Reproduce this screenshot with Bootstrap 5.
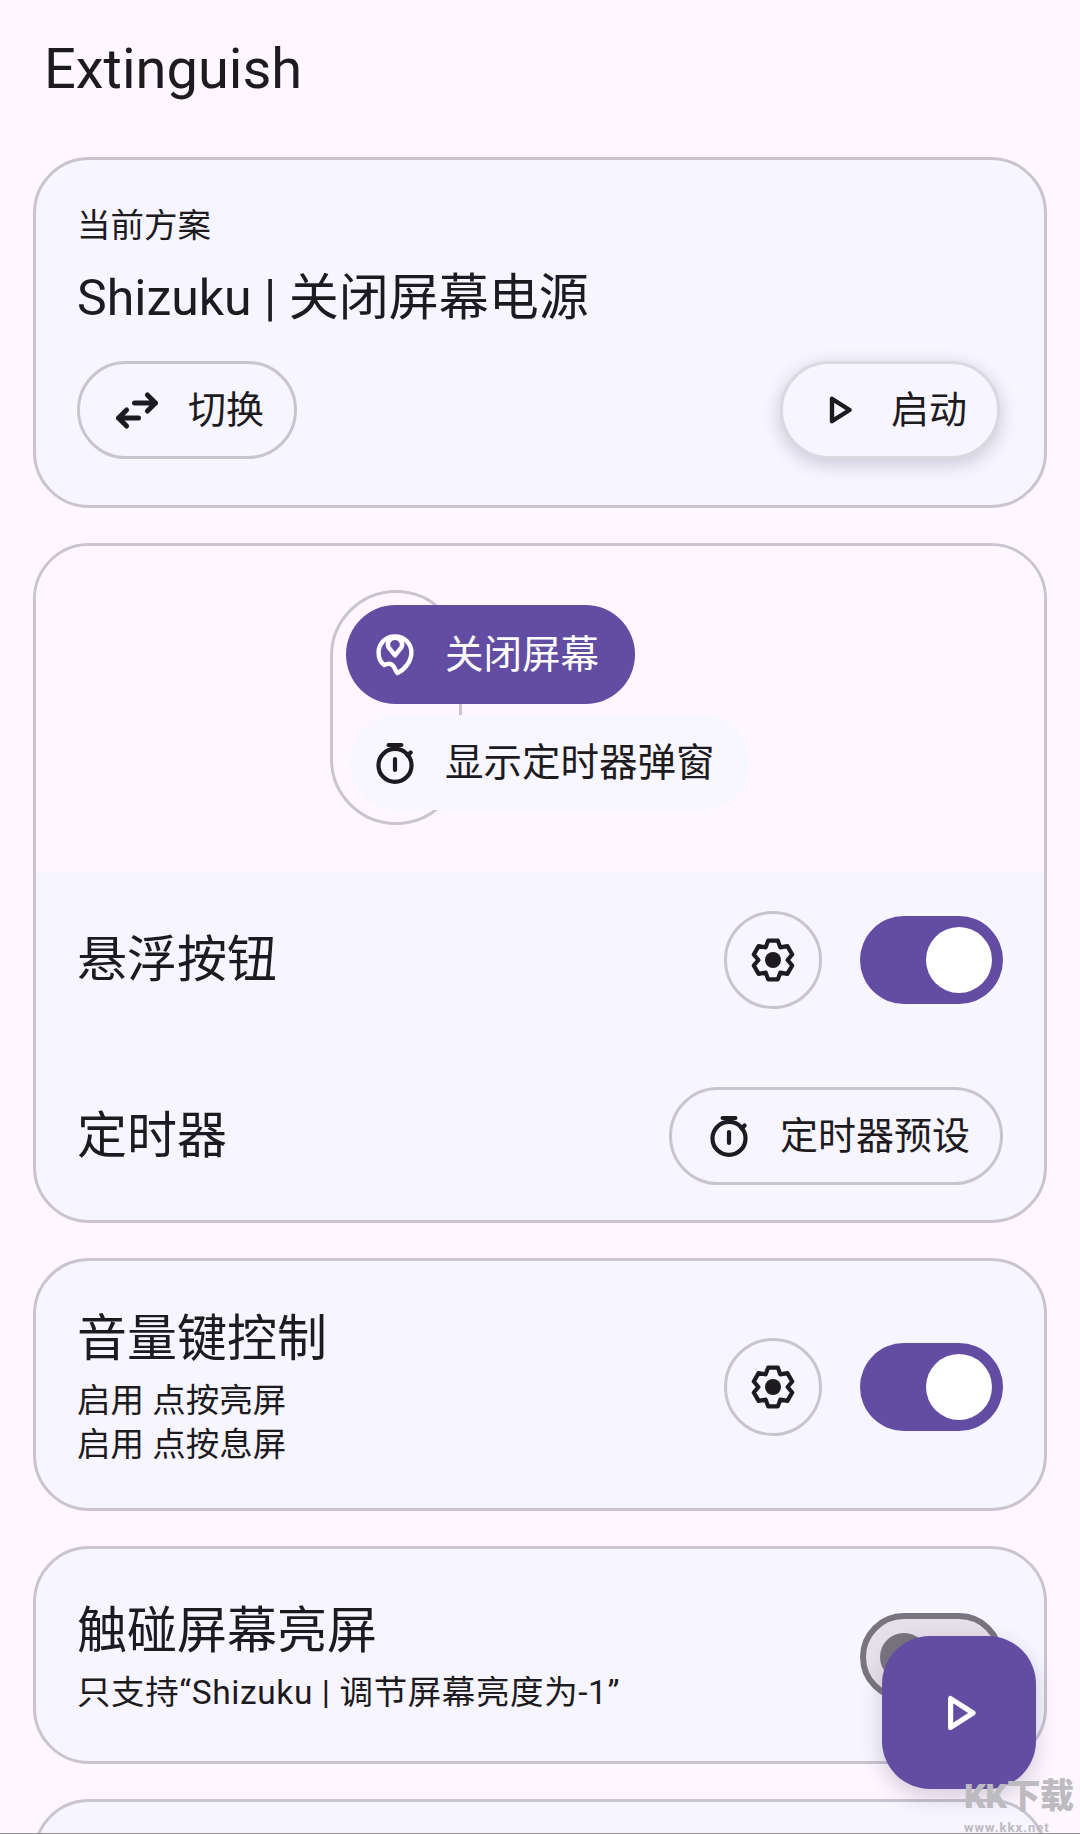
<!doctype html>
<html lang="zh">
<head>
<meta charset="utf-8">
<title>Extinguish</title>
<link href="https://cdn.jsdelivr.net/npm/bootstrap@5.3.0/dist/css/bootstrap.min.css" rel="stylesheet">
<style>
html,body{height:100%;}
body{background:#fef7ff;color:#1d1b20;font-family:Roboto,"Noto Sans CJK SC",sans-serif;width:1080px;height:1834px;overflow:hidden;position:relative;}
.app-title{font-size:56px;line-height:64px;padding:37px 0 0 44px;margin:0;font-weight:400;height:157px;}
.stack{padding:0 33px;gap:35px;}
.panel{background:#f7f5ff;border:3px solid #cac4d0;border-radius:56px;overflow:hidden;flex:none;}
.panel-a{height:351px;padding:44px 44px 0 41px;}
.cur-name{margin-top:18px;}
.cur-actions{margin-top:31px;}
.lbl{font-size:33.5px;line-height:44px;}
.lbl-wide{letter-spacing:.6px;}
.big{font-size:50px;line-height:64px;}
.pill-btn{height:98px;border:3px solid #cac4d0;border-radius:49px;background:transparent;color:#1d1b20;font-size:38px;line-height:1;padding:0 30px 0 33px;gap:27px;display:flex;align-items:center;}
.pill-btn.raised{background:#f7f5ff;border-color:#dcd8e2;box-shadow:0 5px 18px rgba(60,50,90,.24);}
.ic{flex:none;display:block;}
.preview{background:#fef7ff;height:326px;position:relative;}
.ring{position:absolute;left:294px;top:44px;width:132px;height:235px;border:3px solid #cac4d0;border-radius:66px;}
.opts{position:absolute;left:310px;top:59px;gap:11px;}
.opt{border-radius:50px;display:flex;align-items:center;font-size:38.5px;gap:26px;position:relative;}
.opt.on{background:#624da3;color:#fff;width:289px;height:99px;padding-left:25px;}
.opt.off{background:#f8f6ff;height:95px;width:400px;margin-left:4px;padding-left:21px;}
.lower{padding:39px 41px 35px 41px;}
.lower-row{margin-top:78px;}
.round-btn{width:98px;height:98px;border:3px solid #cac4d0;border-radius:50%;background:transparent;padding:0;flex:none;}
.toggle{width:143px;height:88px;border-radius:44px;background:#624da3;position:relative;flex:none;margin-left:38px;}
.toggle::after{content:"";position:absolute;right:11px;top:11px;width:66px;height:66px;border-radius:50%;background:#fff;}
.toggle.dim{background:#e6e0e9;border:6px solid #79747e;}
.toggle.dim::after{left:14px;top:14px;right:auto;width:48px;height:48px;background:#79747e;}
.panel-c{padding:46px 41px 41px 41px;}
.panel-d{padding:50px 41px 46px 41px;}
.gap8{margin-bottom:8px;}
.panel-e{height:120px;}
.fab{position:absolute;left:882px;top:1636px;width:154px;height:153px;border-radius:48px;background:#624da3;box-shadow:0 8px 22px rgba(60,50,90,.22);border:0;padding:0;}
.mark-kk{position:absolute;left:964px;top:1779px;width:116px;font-weight:700;line-height:1;}
.mark-kk b{display:block;font-size:34px;letter-spacing:-.5px;color:#bdbbc0;}
.mark-kk i{display:block;font-style:normal;font-size:13px;letter-spacing:1px;margin-top:8px;color:#bdbbc0;}
.edge{position:absolute;left:0;right:0;bottom:0;height:1px;background:#8f8d92;}
</style>
</head>
<body>
<h1 class="app-title">Extinguish</h1>
<div class="stack d-flex flex-column">
  <section class="panel panel-a">
    <div class="lbl">当前方案</div>
    <div class="big cur-name">Shizuku | 关闭屏幕电源</div>
    <div class="d-flex justify-content-between cur-actions">
      <button class="pill-btn" type="button">
        <svg class="ic" width="48" height="48" viewBox="0 0 24 24" fill="none" stroke="#1d1b20" stroke-width="2.5" stroke-linecap="round" stroke-linejoin="round"><path d="M10.75 8.5H21.25M17.2 4.5l4.05 4-4.05 4"/><path d="M12.75 16H2.75M6.8 12l-4.05 4 4.05 4"/></svg>
        <span>切换</span>
      </button>
      <button class="pill-btn raised" type="button">
        <svg class="ic" width="48" height="48" viewBox="0 0 24 24" fill="none" stroke="#1d1b20" stroke-width="2.2" stroke-linejoin="round"><path d="M8 6.4v11.2L16.8 12z"/></svg>
        <span>启动</span>
      </button>
    </div>
  </section>

  <section class="panel">
    <div class="preview">
      <div class="ring"></div>
      <div class="opts d-flex flex-column">
        <div class="opt on">
          <svg class="ic" width="48" height="48" viewBox="0 0 24 24" fill="none" stroke="#fff" stroke-width="2.2" stroke-linejoin="round" stroke-linecap="round"><path d="M12 2.7C7.3 2.7 3.8 6.4 3.8 10.7c0 2.7 1.1 5 2.8 6.3 1.4-.7 3.2-.9 4.3.2 1.1 1.1 1.4 3 2.3 3.8 3.3-1.5 7-5.6 7-10.3 0-4.3-3.5-8-8.2-8z"/><path d="M12 12.2 8.8 8.2C7.6 6 9.4 3.4 12 3.4s4.4 2.6 3.2 4.8z"/></svg>
          <span>关闭屏幕</span>
        </div>
        <div class="opt off">
          <svg class="ic" width="48" height="48" viewBox="0 0 24 24" fill="none" stroke="#1d1b20" stroke-width="2.1" stroke-linecap="round"><circle cx="12" cy="13.2" r="8.25"/><path d="M8.8 3h6.4M12 10v5.5M19.8 6.7l-1.5 1.5"/></svg>
          <span>显示定时器弹窗</span>
        </div>
      </div>
    </div>
    <div class="lower">
      <div class="d-flex align-items-center">
        <div class="big flex-grow-1">悬浮按钮</div>
        <button class="round-btn d-flex align-items-center justify-content-center" type="button" aria-label="设置">
          <svg width="48" height="48" viewBox="0 0 24 24" fill="none" stroke="#1d1b20" stroke-width="2.1" stroke-linejoin="round"><path d="M9.58 2.3h4.84l1.23 3.38 3.54-.63 2.42 4.19L19.3 12l2.31 2.76-2.42 4.19-3.54-.63-1.23 3.38H9.58l-1.23-3.38-3.54.63-2.42-4.19L4.7 12 2.39 9.24l2.42-4.19 3.54.63z"/><circle cx="12" cy="12" r="4" fill="#1d1b20" stroke="none"/></svg>
        </button>
        <div class="toggle"></div>
      </div>
      <div class="d-flex align-items-center justify-content-between lower-row">
        <div class="big">定时器</div>
        <button class="pill-btn" type="button">
          <svg class="ic" width="48" height="48" viewBox="0 0 24 24" fill="none" stroke="#1d1b20" stroke-width="2.1" stroke-linecap="round"><circle cx="12" cy="13.2" r="8.25"/><path d="M8.8 3h6.4M12 10v5.5M19.8 6.7l-1.5 1.5"/></svg>
          <span>定时器预设</span>
        </button>
      </div>
    </div>
  </section>

  <section class="panel panel-c d-flex align-items-center">
    <div class="flex-grow-1">
      <div class="big gap8">音量键控制</div>
      <div class="lbl">启用 点按亮屏<br>启用 点按息屏</div>
    </div>
    <button class="round-btn d-flex align-items-center justify-content-center" type="button" aria-label="设置">
      <svg width="48" height="48" viewBox="0 0 24 24" fill="none" stroke="#1d1b20" stroke-width="2.1" stroke-linejoin="round"><path d="M9.58 2.3h4.84l1.23 3.38 3.54-.63 2.42 4.19L19.3 12l2.31 2.76-2.42 4.19-3.54-.63-1.23 3.38H9.58l-1.23-3.38-3.54.63-2.42-4.19L4.7 12 2.39 9.24l2.42-4.19 3.54.63z"/><circle cx="12" cy="12" r="4" fill="#1d1b20" stroke="none"/></svg>
    </button>
    <div class="toggle"></div>
  </section>

  <section class="panel panel-d d-flex align-items-center">
    <div class="flex-grow-1">
      <div class="big gap8">触碰屏幕亮屏</div>
      <div class="lbl lbl-wide">只支持“Shizuku | 调节屏幕亮度为-1”</div>
    </div>
    <div class="toggle dim"></div>
  </section>

  <section class="panel panel-e"></section>
</div>

<button class="fab d-flex align-items-center justify-content-center" type="button" aria-label="启动">
  <svg width="48" height="48" viewBox="0 0 24 24" fill="none" stroke="#fff" stroke-width="2.6" stroke-linejoin="round"><path d="M7.8 4.8v14.4L19 12z"/></svg>
</button>
<div class="mark-kk"><b>KK下载</b><i>www.kkx.net</i></div>
<div class="edge"></div>
<script src="https://cdn.jsdelivr.net/npm/bootstrap@5.3.0/dist/js/bootstrap.bundle.min.js"></script>
</body>
</html>
